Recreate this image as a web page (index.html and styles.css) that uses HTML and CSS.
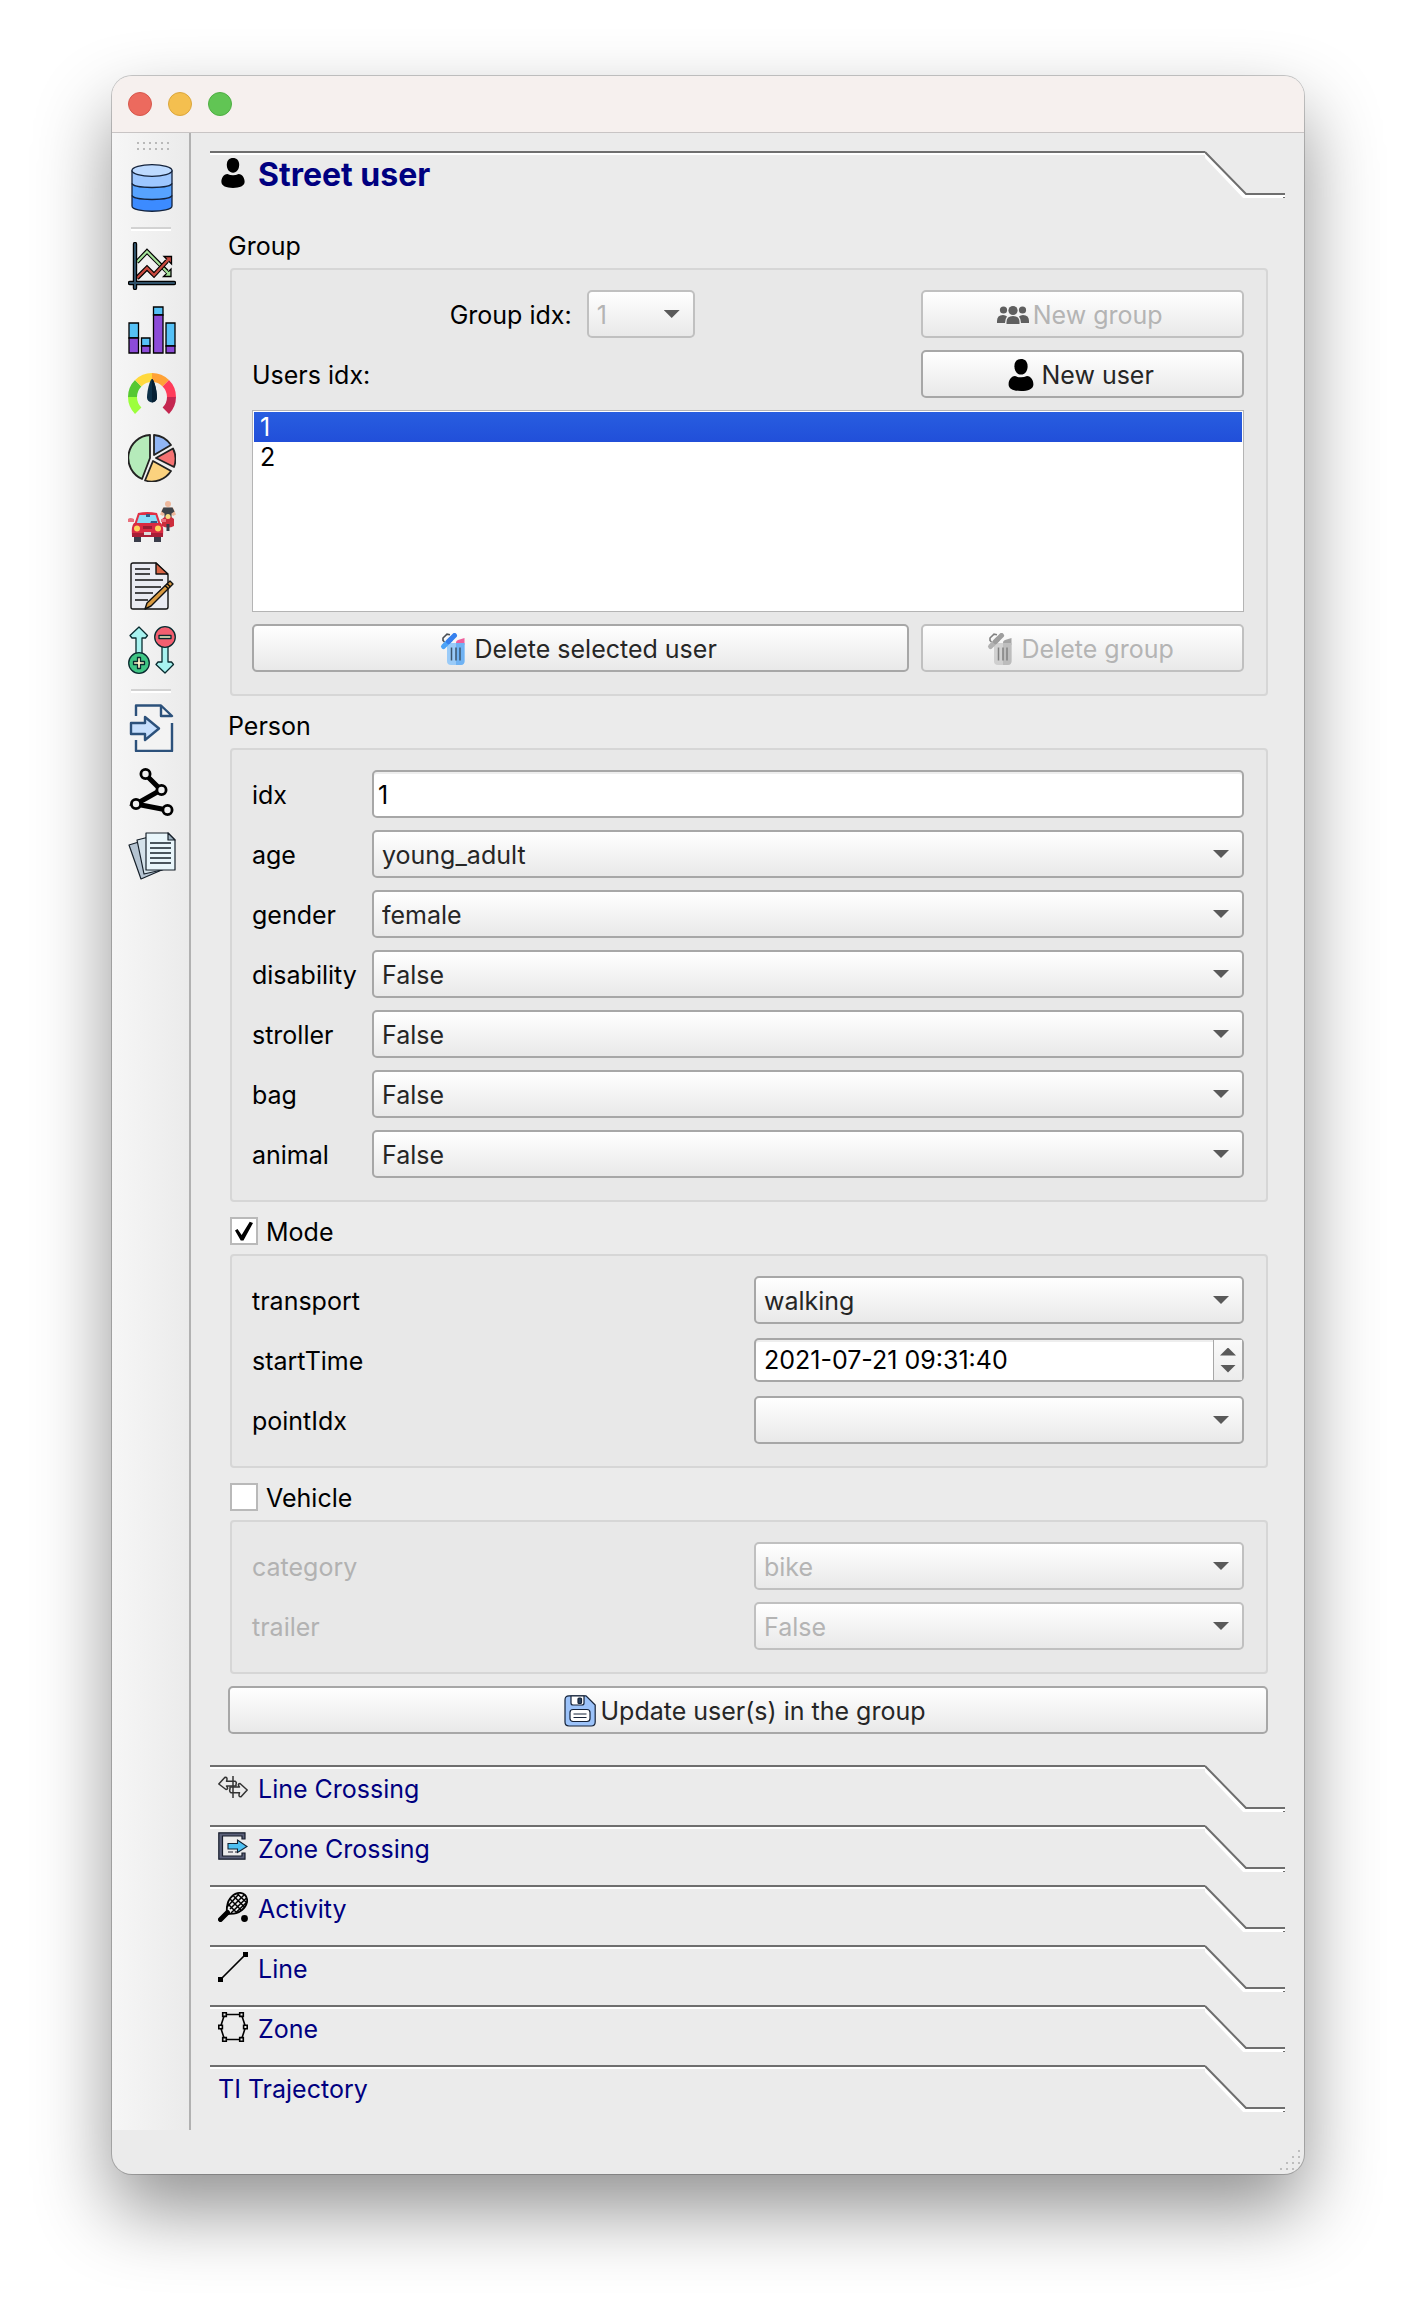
FILE: index.html
```html
<!DOCTYPE html>
<html lang="en">
<head>
<meta charset="utf-8">
<meta name="viewport" content="width=device-width, initial-scale=1">
<title>Street user</title>
<link rel="stylesheet" href="styles.css">
</head>
<body>
<svg class="defs" width="0" height="0" aria-hidden="true">
  <symbol id="tab-edge" viewBox="0 0 80 48">
    <path d="M0 3H-1L39 45H80" fill="none" stroke="#fff" stroke-width="4"/>
    <path d="M0 1L41 43H80" fill="none" stroke="#6e6e6e" stroke-width="2"/>
    <path d="M78 46.5h2" stroke="#6e6e6e"/>
  </symbol>
  <symbol id="person" viewBox="0 0 32 32">
    <path d="M16 0c4 0 6.600 2.600 6.600 7.200S20 15.600 16 15.600 9.400 12 9.400 7.200 12 0 16 0z"/>
    <path d="M10 17q6 2.600 12 0c4 .4 6.400 4 6.400 8.400C28.400 30 23 32 16 32S3.600 30 3.600 25.400C3.600 21 6 17.400 10 17z"/>
  </symbol>
  <symbol id="trash" viewBox="0 0 32 32">
    <path d="M17 9.500q0-2 2-2.500l6.500-2V12H17z" fill="#ef5f9c"/>
    <path d="M8 10h17.500v18q0 4-4 4H12q-4 0-4-4z" fill="#9acbf8"/>
    <path d="M17 10h8.500v18q0 4-4 4H17z" fill="#6fb2f3"/>
    <path d="M12.500 14.500v13M17 14.500v13M21 14.500v13" stroke="#3c566e" stroke-width="1.500"/>
    <path d="M5.500 9L4 7.500V5L8 1.200l3 .6" fill="none" stroke="#4a4f55" stroke-width="1.600"/>
    <path d="M4.500 13.500l7-7" stroke="#4ba3f7" stroke-width="5" stroke-linecap="round"/>
    <path d="M9.500 8.500l6-6" stroke="#3680ee" stroke-width="5" stroke-linecap="round"/>
  </symbol>
</svg>

<main class="window">
  <header class="titlebar">
    <button class="light light-close" type="button" aria-label="Close"></button>
    <button class="light light-min" type="button" aria-label="Minimize"></button>
    <button class="light light-zoom" type="button" aria-label="Zoom"></button>
  </header>

  <div class="workspace">
    <nav class="toolbar" aria-label="Tools">
      <svg class="handle" width="34" height="10" viewBox="0 0 34 10" aria-hidden="true">
        <path d="M0 2h34M0 8h34" stroke="#b9b9b9" stroke-width="2" stroke-dasharray="2 4"/>
      </svg>
      <button class="tool" type="button" aria-label="Open database">
        <svg viewBox="0 0 48 48" stroke="#14233c" stroke-width="1.300">
          <path d="M4 32v10c0 7 40 7 40 0V32z" fill="#3c8bff"/>
          <path d="M4 20v11c0 6 40 6 40 0V20z" fill="#57a3ff"/>
          <path d="M4 7v12c0 6 40 6 40 0V7z" fill="#9dc7ff"/>
          <ellipse cx="24" cy="6.500" rx="20" ry="5.800" fill="#bddaff"/>
        </svg>
      </button>
      <hr class="tool-sep">
      <button class="tool" type="button" aria-label="Line chart">
        <svg viewBox="0 0 48 48" fill="none" stroke-linejoin="miter">
          <path d="M9 20L19 9.500l20 20" stroke="#000" stroke-width="4.400"/>
          <path d="M43 27v7.500h-7.500z" fill="#a5e29a" stroke="#000" stroke-width="1.300"/>
          <path d="M9 20L19 9.500l22 22.500" stroke="#a5e29a" stroke-width="2.200"/>
          <path d="M9 36l10-10 7 7 13-14" stroke="#000" stroke-width="4.600"/>
          <path d="M36 14.500h7.500V22z" fill="#c8493f" stroke="#000" stroke-width="1.300"/>
          <path d="M9 36l10-10 7 7 15-16" stroke="#c8493f" stroke-width="2.400"/>
          <path d="M7 2v44M2 41h44" stroke="#000" stroke-width="4.400" stroke-linecap="round"/>
          <path d="M7 2v44M2 41h44" stroke="#2e5068" stroke-width="2" stroke-linecap="round"/>
        </svg>
      </button>
      <button class="tool" type="button" aria-label="Bar chart">
        <svg viewBox="0 0 48 48" stroke="#000" stroke-width="1.300">
          <path d="M1 17h9.500v15H1zM13.500 32H22v8h-8.500zM25.500 1H35v8h-9.500zM38 17h9v23h-9z" fill="#55c1f6"/>
          <path d="M1 32h9.500v15H1zM13.500 40H22v7h-8.500zM25.500 9H35v38h-9.500zM38 40h9v7h-9z" fill="#8c4bd8"/>
        </svg>
      </button>
      <button class="tool" type="button" aria-label="Gauge">
        <svg viewBox="0 0 48 48" fill="none" stroke-width="9">
          <path d="M10.200 40.800A19.500 19.500 0 0 1 4.500 27" stroke="#9cff3c"/>
          <path d="M4.500 27a19.500 19.500 0 0 1 5.700-13.800" stroke="#55c832"/>
          <path d="M10.200 13.200A19.500 19.500 0 0 1 24 7.500" stroke="#ffd93d"/>
          <path d="M24 7.500a19.500 19.500 0 0 1 13.800 5.700" stroke="#ffa236"/>
          <path d="M37.800 13.200A19.500 19.500 0 0 1 43.500 27" stroke="#ff3c5a"/>
          <path d="M43.500 27a19.500 19.500 0 0 1-5.700 13.800" stroke="#c42750"/>
          <path d="M24 9c2 0 5 12 5 18.500a5 5 0 0 1-10 0C19 21 22 9 24 9z" fill="#0d3048"/>
          <path d="M24 9c2 0 5 12 5 18.500a5 5 0 0 1-5 5z" fill="#061f33"/>
        </svg>
      </button>
      <button class="tool" type="button" aria-label="Pie chart">
        <svg viewBox="0 0 48 48" stroke="#222" stroke-width="1.800" stroke-linejoin="round">
          <path d="M22 1v23l-8 21A23 23 0 0 1 22 1z" fill="#b5ebba"/>
          <path d="M26 1a23 23 0 0 1 17 10L26 21z" fill="#91b6f5"/>
          <path d="M45 14.500a23 23 0 0 1 1 18.500L28 24z" fill="#f57272"/>
          <path d="M25 27l18 10a23 23 0 0 1-26 9.500z" fill="#fbd27e"/>
        </svg>
      </button>
      <button class="tool" type="button" aria-label="Vehicles">
        <svg viewBox="0 0 48 48">
          <circle cx="40" cy="6" r="3" fill="#eeb89c"/>
          <path d="M35 9.500h10l3 7-3 1.500-1.500-2v5h-7v-5L35 18l-3-1.500z" fill="#eeb89c"/>
          <path d="M35.500 9.500h9l2 4-3 2v5h-7v-5l-3-2z" fill="#3d4248"/>
          <path d="M34 21q6-6 12 0v7q-6 3-12 0z" fill="#cc2d3c"/>
          <circle cx="40" cy="18.500" r="2.500" fill="#f7dc83"/>
          <path d="M38.500 26h3v7h-3z" fill="#343c48"/>
          <path d="M6 36h7v8H6zM26 36h7v8h-7z" fill="#3a3d4a"/>
          <path d="M10 15q9-2 19 0l4 12H6z" fill="#e02f44"/>
          <path d="M11.500 17h16l3 9H8.500z" fill="#8adcf8"/>
          <path d="M18 16h4v3h-4zM23 23h6v3h-7z" fill="#315c86"/>
          <path d="M0 21q2-2 6 0v3H0zM33 21h5v3h-5z" fill="#e9717d"/>
          <path d="M6 25h27q3 3 2 13H4Q3 28 6 25z" fill="#d92b43"/>
          <path d="M4 35h31v4H4z" fill="#a91f36"/>
          <circle cx="9" cy="30.500" r="3" fill="#ffd45e"/><circle cx="30" cy="30.500" r="3" fill="#ffd45e"/>
          <path d="M15 28h9v3h-9z" fill="#961f35"/><path d="M16 34h7v3h-7z" fill="#ddd"/>
        </svg>
      </button>
      <button class="tool" type="button" aria-label="Edit notes">
        <svg viewBox="0 0 48 48" stroke="#111" stroke-width="1.400" stroke-linejoin="round">
          <path d="M5 1h23l12 12v32q0 2-2 2H5q-2 0-2-2V3q0-2 2-2z" fill="#eaebf2"/>
          <path d="M28 1v11h12z" fill="#d96546"/>
          <path d="M7 7h15M7 12h15M7 18h28M7 25h26M7 31h18M7 38h13" stroke-width="1.600"/>
          <path d="M42 19l3 3-22 22-6 3 2-6z" fill="#d99a41"/>
          <path d="M37 23.500l3.500 3.500M39 21.500l3.500 3.500" stroke-width="1.600"/>
        </svg>
      </button>
      <button class="tool" type="button" aria-label="Add or remove">
        <svg viewBox="0 0 48 48" stroke="#082b2f" stroke-width="1.300" stroke-linejoin="round">
          <path d="M11 1l8.500 8.500-2 2.500H14v17H8V12H4l-2-2.500z" fill="#a8f3f0"/>
          <path d="M37 47l8.500-8.500-2-2.500H40V20h-6v16h-4l-2 2.500z" fill="#a8f3f0"/>
          <circle cx="11" cy="37" r="10.300" fill="#3fc684"/>
          <circle cx="37" cy="11" r="10.300" fill="#f35f70"/>
          <path d="M9.500 31.500h3v4h4v3h-4v4h-3v-4h-4v-3h4zM31 9.500h12v3H31z" fill="#fff6c9"/>
        </svg>
      </button>
      <hr class="tool-sep">
      <button class="tool" type="button" aria-label="Import">
        <svg viewBox="0 0 48 48" fill="none" stroke="#2c517b" stroke-width="2.400" stroke-linejoin="round">
          <path d="M8 13V1.500h25L44 12v35H8V36" fill="#f3f3f3" stroke="none"/>
          <path d="M8 12V1.500h25L44 12H33V1.500M44 19v28H8V36"/>
          <path d="M3 19h14v-6l14 11.500L17 36v-6H3z" fill="#c7dffd"/>
        </svg>
      </button>
      <button class="tool" type="button" aria-label="Trajectory">
        <svg viewBox="0 0 48 48" fill="none" stroke="#000">
          <path d="M17 6l16 16L8 36l31 6" stroke-width="5"/>
          <g fill="#f0f0f0" stroke-width="2.800"><circle cx="17.500" cy="6" r="4.600"/><circle cx="33.500" cy="22" r="4.600"/><circle cx="8" cy="36" r="4.600"/><circle cx="39.500" cy="42" r="4.600"/></g>
        </svg>
      </button>
      <button class="tool" type="button" aria-label="Documents">
        <svg viewBox="0 0 48 48" stroke="#16202a" stroke-width="1.200" stroke-linejoin="round">
          <path d="M1 13l13-4 22 28-23 10z" fill="#b5c4d2"/>
          <path d="M9 8l12-3 17 32-22 5z" fill="#d4e2ea"/>
          <path d="M18 1h22l7 7v30H18z" fill="#e9f6fb"/>
          <path d="M40 1v7h7z" fill="#9fb2c0"/>
          <path d="M22 11h21M22 16h21M22 21h21M22 26h21M22 31h21" stroke-width="1.500"/>
        </svg>
      </button>
    </nav>

    <div class="toolbox">
      <h2 class="tab tab-open">
        <button class="tab-button" type="button" aria-expanded="true">
          <svg class="tab-icon" viewBox="0 0 32 32" aria-hidden="true"><use href="#person"/></svg>
          Street user
        </button>
        <svg class="tab-edge" aria-hidden="true"><use href="#tab-edge"/></svg>
      </h2>

      <div class="panel">
        <h3 class="group-title">Group</h3>
        <section class="frame group-grid" aria-label="Group">
          <label class="group-label" for="group-idx">Group idx:</label>
          <span class="combo combo-small"><select id="group-idx" disabled><option>1</option></select></span>
          <button class="btn" type="button" disabled>
            <svg class="btn-icon" viewBox="0 0 32 32" fill="#5f5f5f" aria-hidden="true">
              <circle cx="6.500" cy="11" r="3.600"/><circle cx="25.500" cy="11" r="3.600"/><circle cx="16" cy="11.500" r="4.600"/>
              <path d="M0 24v-2q0-6 6-6 2.500 0 4 1.500Q8 20 8 24zM32 24v-2q0-6-6-6-2.500 0-4 1.500 2 2.500 2 6.500zM9.500 25v-2q0-6 6.500-6t6.500 6v2z"/>
            </svg>New group
          </button>
          <span class="users-label" id="users-label">Users idx:</span>
          <button class="btn" type="button"><svg class="btn-icon" viewBox="0 0 32 32" aria-hidden="true"><use href="#person"/></svg>New user</button>
          <ul class="users" role="listbox" aria-labelledby="users-label">
            <li role="option" aria-selected="true">1</li>
            <li role="option" aria-selected="false">2</li>
          </ul>
          <button class="btn btn-wide" type="button"><svg class="btn-icon" viewBox="0 0 32 32" aria-hidden="true"><use href="#trash"/></svg>Delete selected user</button>
          <button class="btn" type="button" disabled><svg class="btn-icon icon-off" viewBox="0 0 32 32" aria-hidden="true"><use href="#trash"/></svg>Delete group</button>
        </section>

        <h3 class="group-title">Person</h3>
        <section class="frame person-grid" aria-label="Person">
          <label for="idx">idx</label><input class="field" id="idx" type="text" value="1">
          <label for="age">age</label><span class="combo"><select id="age"><option>young_adult</option></select></span>
          <label for="gender">gender</label><span class="combo"><select id="gender"><option>female</option></select></span>
          <label for="disability">disability</label><span class="combo"><select id="disability"><option>False</option></select></span>
          <label for="stroller">stroller</label><span class="combo"><select id="stroller"><option>False</option></select></span>
          <label for="bag">bag</label><span class="combo"><select id="bag"><option>False</option></select></span>
          <label for="animal">animal</label><span class="combo"><select id="animal"><option>False</option></select></span>
        </section>

        <h3 class="group-title"><label class="check"><input type="checkbox" checked>Mode</label></h3>
        <section class="frame half-grid" aria-label="Mode">
          <label for="transport">transport</label><span class="combo"><select id="transport"><option>walking</option></select></span>
          <label for="start">startTime</label>
          <span class="spin">
            <input id="start" type="text" value="2021-07-21 09:31:40">
            <span class="spin-buttons">
              <button class="spin-up" type="button" aria-label="Later"></button>
              <button class="spin-down" type="button" aria-label="Earlier"></button>
            </span>
          </span>
          <label for="point">pointIdx</label><span class="combo"><select id="point"><option></option></select></span>
        </section>

        <h3 class="group-title"><label class="check"><input type="checkbox">Vehicle</label></h3>
        <section class="frame half-grid frame-off" aria-label="Vehicle">
          <label for="category">category</label><span class="combo"><select id="category" disabled><option>bike</option></select></span>
          <label for="trailer">trailer</label><span class="combo"><select id="trailer" disabled><option>False</option></select></span>
        </section>

        <button class="btn btn-update" type="button">
          <svg class="btn-icon" viewBox="0 0 32 32" stroke="#152238" stroke-width="1.200" aria-hidden="true">
            <path d="M5 .8h17L31.200 10v17q0 4-4 4H5q-4 0-4-4V5Q1 .8 5 .8z" fill="#9cc3fa"/>
            <path d="M7 1v7q0 2 2 2h9q2 0 2-2V1z" fill="#fff"/><rect x="14" y="3" width="3.500" height="5.500" rx="1" fill="#28415f"/>
            <rect x="6" y="14.500" width="20" height="12" rx="3" fill="#fff"/><path d="M9.500 19h13M9.500 22.500h13"/>
          </svg>Update user(s) in the group
        </button>
      </div>

      <h2 class="tab">
        <button class="tab-button" type="button" aria-expanded="false">
          <svg class="tab-icon" viewBox="0 0 30 30" fill="none" stroke="#333" stroke-width="1.500" stroke-linejoin="round" aria-hidden="true">
            <path d="M18 12v2H8.500q2.500 3-.5 3.500L.8 12 7 5.200q3-.2 1.500 4H17q2 1 1 2.800z"/>
            <path d="M12 17v-2h9.500q-2.500-3 .5-3.500l7.200 6.500-6.200 6.800q-3 .2-1.500-4H13q-2-1-1-3.800z"/>
            <path d="M15 4v22"/>
          </svg>Line Crossing
        </button>
        <svg class="tab-edge" aria-hidden="true"><use href="#tab-edge"/></svg>
      </h2>
      <h2 class="tab">
        <button class="tab-button" type="button" aria-expanded="false">
          <svg class="tab-icon" viewBox="0 0 30 30" aria-hidden="true">
            <path d="M27 7V.8H.8v26.400H27V21h-3v3H4.500V4H24v3z" fill="#5b6079" stroke="#161c2b" stroke-width="1.200"/>
            <path d="M10 11.500h9.500V8l9.500 6.500-9.500 6V17H10z" fill="#4dc0f2" stroke="#123" stroke-width="1.100"/>
            <path d="M10 20h5M17 20h2" stroke="#223"/>
          </svg>Zone Crossing
        </button>
        <svg class="tab-edge" aria-hidden="true"><use href="#tab-edge"/></svg>
      </h2>
      <h2 class="tab">
        <button class="tab-button" type="button" aria-expanded="false">
          <svg class="tab-icon" viewBox="0 0 30 30" fill="none" stroke="#000" aria-hidden="true">
            <path d="M2.500 27.500l7-7" stroke-width="5" stroke-linecap="round"/>
            <path d="M9 22q-1-10 3-15.500C16 1 23-1 27 3s2 11-3 15-8 3.500-15 4z" stroke-width="1.800"/>
            <path d="M12 7l11 11M15.500 4l11 11M19 1.500l10 9.500M9.500 11.500l9 9M12 17L26.500 2.500M9 15L21 2M13 21L28.500 6M18 20.500L29 10" stroke-width="1.500"/>
            <circle cx="26.500" cy="26.500" r="3.400" fill="#000" stroke="none"/>
          </svg>Activity
        </button>
        <svg class="tab-edge" aria-hidden="true"><use href="#tab-edge"/></svg>
      </h2>
      <h2 class="tab">
        <button class="tab-button" type="button" aria-expanded="false">
          <svg class="tab-icon" viewBox="0 0 30 30" aria-hidden="true">
            <path d="M3 27L27 3" stroke="#000" stroke-width="1.700"/><path d="M0 25h5v5H0zM25 0h5v5h-5z"/>
          </svg>Line
        </button>
        <svg class="tab-edge" aria-hidden="true"><use href="#tab-edge"/></svg>
      </h2>
      <h2 class="tab">
        <button class="tab-button" type="button" aria-expanded="false">
          <svg class="tab-icon" viewBox="0 0 30 30" stroke="#000" stroke-width="1.600" fill="#ebebeb" aria-hidden="true">
            <path d="M6.500 2.500h17l4 12.500-4 12.500h-17L2.500 15z"/>
            <path d="M4.700.8h3.600v3.600H4.700zM21.700.8h3.600v3.600h-3.600zM.8 13.200h3.600v3.600H.8zM25.600 13.200h3.600v3.600h-3.600zM4.700 25.600h3.600v3.600H4.700zM21.700 25.600h3.600v3.600h-3.600z"/>
          </svg>Zone
        </button>
        <svg class="tab-edge" aria-hidden="true"><use href="#tab-edge"/></svg>
      </h2>
      <h2 class="tab">
        <button class="tab-button" type="button" aria-expanded="false">TI Trajectory</button>
        <svg class="tab-edge" aria-hidden="true"><use href="#tab-edge"/></svg>
      </h2>
    </div>
  </div>

  <footer class="statusbar">
    <svg width="20" height="20" viewBox="0 0 20 20" stroke="#bdbdbd" stroke-width="2" stroke-dasharray="2 4" aria-hidden="true">
      <path d="M18 1h2M12 7h8M6 13h14M0 19h20"/>
    </svg>
  </footer>
</main>
</body>
</html>
```
FILE: styles.css
```css
* {
  box-sizing: border-box;
}

body {
  margin: 0;
  padding: 76px 112px 148px;
  background: #fff;
  color: #000;
  font-family: Inter, "Liberation Sans", sans-serif;
  font-size: 25px;
  line-height: 30px;
}

button,
input,
select {
  font: inherit;
  color: inherit;
}

h2,
h3 {
  margin: 0;
  font: inherit;
}

.defs {
  position: absolute;
}

.window {
  display: flex;
  flex-direction: column;
  border-radius: 20px;
  background: #ebebeb;
  box-shadow: 0 0 0 1px rgba(0, 0, 0, 0.2), 0 36px 76px rgba(0, 0, 0, 0.43);
  overflow: hidden;
}

.titlebar {
  display: flex;
  align-items: center;
  gap: 16px;
  height: 57px;
  padding: 0 16px;
  border-bottom: 1px solid #c8c4c4;
  background: #f6f0ee;
}

.light {
  width: 24px;
  height: 24px;
  padding: 0;
  border: 1px solid;
  border-radius: 50%;
}

.light-close {
  background: #ec6a5e;
  border-color: #d6574c;
}

.light-min {
  background: #f4bf4f;
  border-color: #dba63c;
}

.light-zoom {
  background: #61c554;
  border-color: #4fae43;
}

.workspace {
  display: flex;
}

/* Toolbar */

.toolbar {
  display: flex;
  flex: none;
  flex-direction: column;
  align-items: center;
  width: 79px;
  padding: 8px 0 0;
  border-right: 2px solid #b1b1b1;
  background: linear-gradient(90deg, #f6f6f6, #ebebeb);
}

.handle {
  margin: 0 0 5px 6px;
}

.tool {
  width: 64px;
  height: 64px;
  padding: 8px;
  border: 0;
  background: none;
  margin-left: 3px;
}

.tool svg {
  display: block;
  width: 48px;
  height: 48px;
}

.tool-sep {
  width: 40px;
  height: 4px;
  margin: 7px 0 3px;
  border: 0;
  border-top: 2px solid #d2d2d2;
  background: #fff;
}

/* Toolbox */

.toolbox {
  flex: 1;
  min-width: 0;
  padding: 18px 19px 5px;
}

.tab {
  display: flex;
  height: 48px;
  margin-bottom: 12px;
  color: #000080;
}

.tab-open {
  margin-bottom: 0;
  font-size: 32px;
  font-weight: 700;
}

.tab-button {
  display: flex;
  flex: 1;
  align-items: flex-start;
  gap: 10px;
  padding: 5px 8px 0;
  border: 0;
  border-top: 2px solid #6e6e6e;
  background: none;
  box-shadow: inset 0 2px #fff;
  line-height: 34px;
  text-align: left;
}

.tab-icon {
  width: 30px;
  height: 30px;
}

.tab-edge {
  flex: none;
  width: 80px;
  height: 48px;
}

.panel {
  padding: 17px 17px 31px 18px;
}

.group-title {
  display: flex;
  align-items: center;
  height: 52px;
  padding-top: 8px;
}

.check {
  display: flex;
  align-items: center;
  gap: 8px;
  padding-left: 2px;
}

.check input {
  display: grid;
  width: 28px;
  height: 28px;
  margin: 0 0 2px;
  border: 2px solid #b9b9b9;
  background: #fff;
  appearance: none;
  place-items: center;
}

.check input:checked::before {
  width: 18px;
  height: 20px;
  background: #000;
  clip-path: polygon(0 48%, 14% 40%, 37% 70%, 82% 4%, 100% 10%, 47% 98%, 32% 98%);
  content: "";
}

.frame {
  display: grid;
  align-items: center;
  gap: 12px;
  margin: 0 0 0 2px;
  padding: 20px 22px 22px 20px;
  border: 2px solid #d6d6d6;
  border-radius: 4px;
  background: #e8e8e8;
}

.frame > label,
.users-label {
  padding-top: 2px;
}

.frame-off {
  color: #b2b2b2;
}

.group-grid {
  grid-template-columns: repeat(3, minmax(0, 1fr));
}

.person-grid {
  grid-template-columns: 108px minmax(0, 1fr);
}

.half-grid {
  grid-template-columns: repeat(2, minmax(0, 1fr));
}

.group-label {
  padding-right: 3px;
  text-align: right;
}

.users-label,
.btn-wide {
  grid-column: span 2;
}

.users {
  grid-column: 1 / -1;
  height: 202px;
  margin: 0;
  padding: 1px;
  border: 1px solid #b4b4b4;
  background: #fff;
  list-style: none;
}

.users li {
  padding-left: 6px;
}

.users [aria-selected="true"] {
  background: linear-gradient(#285ee0, #214fd9);
  color: #fff;
}

/* Controls */

.btn,
.field,
.combo select,
.spin {
  width: 100%;
  height: 48px;
  border: 2px solid #a7a7a7;
  border-radius: 5px;
}

.btn {
  display: flex;
  align-items: center;
  justify-content: center;
  gap: 4px;
  padding: 2px 6px 0 0;
  background: linear-gradient(#fff, #e9e9e9);
  color: #262626;
}

.btn:disabled,
.combo select:disabled {
  border-color: #c0c0c0;
  color: #b4b4b4;
  opacity: 1;
}

.btn-update {
  margin-top: 12px;
}

.btn-icon {
  width: 32px;
  height: 32px;
}

.icon-off {
  filter: grayscale(1);
  opacity: 0.7;
}

.field {
  padding: 2px 4px 0;
  background: #fff;
  box-shadow: inset 0 2px #eee;
}

.combo {
  display: grid;
  align-items: center;
}

.combo-small {
  width: 108px;
}

.combo select {
  grid-area: 1 / 1;
  padding: 2px 40px 0 8px;
  background: linear-gradient(#fff, #e9e9e9);
  color: #262626;
  appearance: none;
}

.combo select:disabled {
  color: #b4b4b4;
}

.combo::after {
  z-index: 1;
  grid-area: 1 / 1;
  justify-self: end;
  width: 16px;
  height: 8px;
  margin-right: 15px;
  background: #595959;
  clip-path: polygon(0 0, 100% 0, 50% 100%);
  content: "";
  pointer-events: none;
}

.spin {
  display: flex;
  height: 44px;
  margin: 2px 0;
  background: #fff;
  box-shadow: inset 0 2px #eee;
}

.spin input {
  flex: 1;
  min-width: 0;
  padding: 0 8px;
  border: 0;
  background: none;
}

.spin-buttons {
  display: flex;
  flex-direction: column;
  align-items: center;
  justify-content: center;
  gap: 9px;
  width: 29px;
  border-left: 1px solid #a7a7a7;
  background: linear-gradient(#fafafa, #ececec);
}

.spin-buttons button {
  width: 16px;
  height: 8px;
  padding: 0;
  border: 0;
  background: #595959;
}

.spin-up {
  clip-path: polygon(50% 0, 100% 100%, 0 100%);
}

.spin-down {
  clip-path: polygon(0 0, 100% 0, 50% 100%);
}

.statusbar {
  display: flex;
  align-items: flex-end;
  justify-content: flex-end;
  height: 44px;
  padding: 4px;
}
```
